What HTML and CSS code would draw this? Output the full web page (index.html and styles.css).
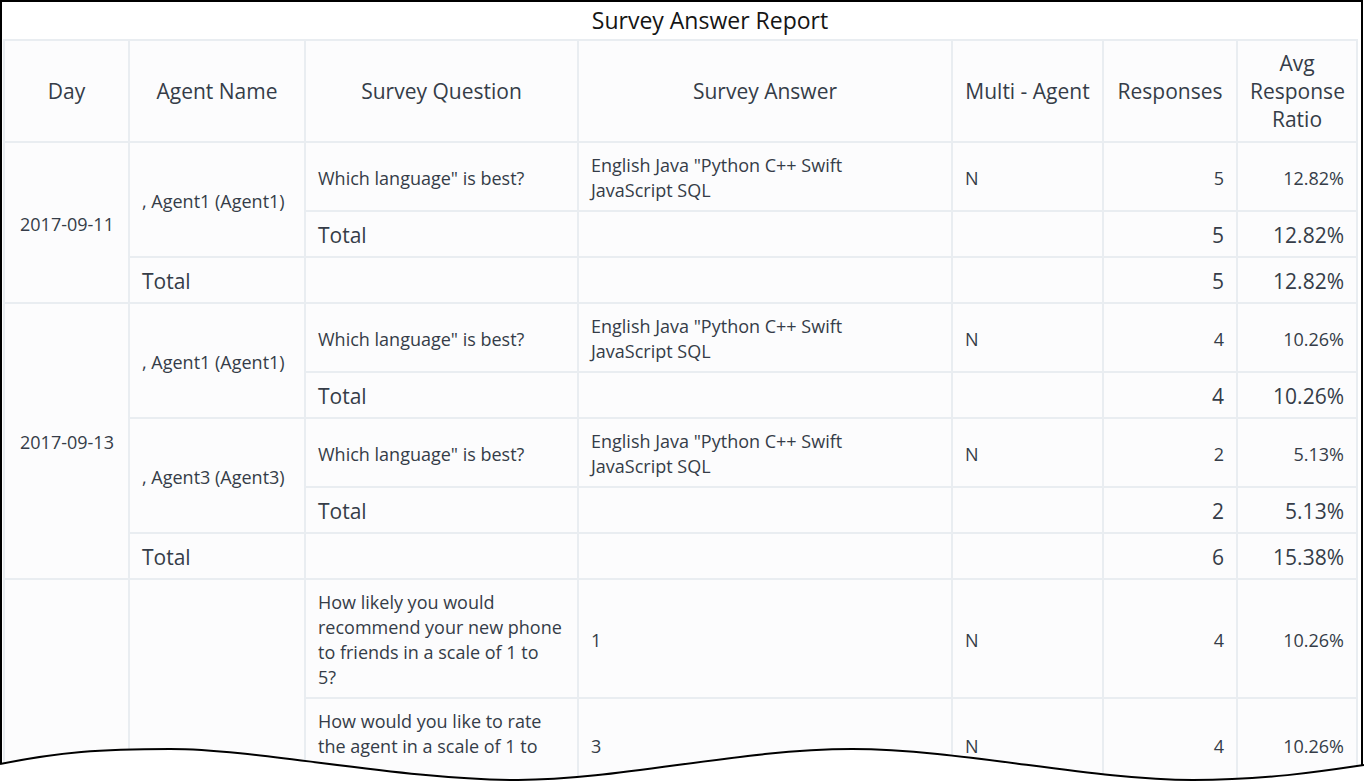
FILE: index.html
```html
<!DOCTYPE html>
<html lang="en">
<head>
  <meta charset="UTF-8">
  <title>Survey Answer Report</title>
  <link rel="stylesheet" href="styles.css">
</head>
<body>

  <div class="report">
    <h1 class="report-title">Survey Answer Report</h1>

    <table class="grid">
      <colgroup>
        <col class="c-day">
        <col class="c-agent">
        <col class="c-question">
        <col class="c-answer">
        <col class="c-multi">
        <col class="c-resp">
        <col class="c-ratio">
      </colgroup>
      <thead>
        <tr>
          <th>Day</th>
          <th>Agent Name</th>
          <th>Survey Question</th>
          <th>Survey Answer</th>
          <th>Multi - Agent</th>
          <th>Responses</th>
          <th>Avg Response Ratio</th>
        </tr>
      </thead>
      <tbody>
        <tr>
          <td rowspan="3" class="day">2017-09-11</td>
          <td rowspan="2">, Agent1 (Agent1)</td>
          <td>Which language" is best?</td>
          <td class="answer">English Java "Python C++ Swift JavaScript SQL</td>
          <td>N</td>
          <td class="num">5</td>
          <td class="num">12.82%</td>
        </tr>
        <tr class="total">
          <td>Total</td>
          <td></td>
          <td></td>
          <td class="num">5</td>
          <td class="num">12.82%</td>
        </tr>
        <tr class="total">
          <td>Total</td>
          <td></td>
          <td></td>
          <td></td>
          <td class="num">5</td>
          <td class="num">12.82%</td>
        </tr>

        <tr>
          <td rowspan="5" class="day">2017-09-13</td>
          <td rowspan="2">, Agent1 (Agent1)</td>
          <td>Which language" is best?</td>
          <td class="answer">English Java "Python C++ Swift JavaScript SQL</td>
          <td>N</td>
          <td class="num">4</td>
          <td class="num">10.26%</td>
        </tr>
        <tr class="total">
          <td>Total</td>
          <td></td>
          <td></td>
          <td class="num">4</td>
          <td class="num">10.26%</td>
        </tr>
        <tr>
          <td rowspan="2">, Agent3 (Agent3)</td>
          <td>Which language" is best?</td>
          <td class="answer">English Java "Python C++ Swift JavaScript SQL</td>
          <td>N</td>
          <td class="num">2</td>
          <td class="num">5.13%</td>
        </tr>
        <tr class="total">
          <td>Total</td>
          <td></td>
          <td></td>
          <td class="num">2</td>
          <td class="num">5.13%</td>
        </tr>
        <tr class="total">
          <td>Total</td>
          <td></td>
          <td></td>
          <td></td>
          <td class="num">6</td>
          <td class="num">15.38%</td>
        </tr>

        <tr>
          <td rowspan="2" class="day"></td>
          <td rowspan="2"></td>
          <td>How likely you would recommend your new phone to friends in a scale of 1 to<br>5?</td>
          <td>1</td>
          <td>N</td>
          <td class="num">4</td>
          <td class="num">10.26%</td>
        </tr>
        <tr>
          <td>How would you like to rate the agent in a scale of 1 to<br>5?</td>
          <td>3</td>
          <td>N</td>
          <td class="num">4</td>
          <td class="num">10.26%</td>
        </tr>
      </tbody>
    </table>
  </div>

  <!-- torn edge of the screenshot -->
  <svg class="torn" width="1364" height="40" viewBox="0 743 1364 40">
    <path d="M0,764 C60,752 100,749 170,749 C260,749 400,780 518,780 C620,780 740,749 852,749 C960,749 1090,780 1193,780 C1270,780 1330,770 1364,765 L1364,783 L0,783 Z" fill="#fff"/>
    <path d="M0,764 C60,752 100,749 170,749 C260,749 400,780 518,780 C620,780 740,749 852,749 C960,749 1090,780 1193,780 C1270,780 1330,770 1364,765" fill="none" stroke="#000" stroke-width="2"/>
  </svg>

</body>
</html>
```

FILE: styles.css
```css
html, body {
  margin: 0;
  height: 100%;
  overflow: hidden;
  background: #fff;
}

body {
  font-family: "Open Sans", "Liberation Sans", sans-serif;
  color: #353c48;
}

.report {
  box-sizing: border-box;
  width: 1363px;
  border: 2px solid #000;
  border-bottom: none;
  padding: 0 4px 0 1px;
  background: #fff;
}

.report-title {
  margin: 0;
  height: 37px;
  line-height: 37px;
  padding-left: 60px;
  text-align: center;
  font-size: 23px;
  font-weight: 400;
  color: #151515;
}

.grid {
  width: 1355px;
  table-layout: fixed;
  border-collapse: collapse;
  border: 2px solid #e9edf1;
  background: #fcfcfd;
}

.c-day { width: 125px; }
.c-agent { width: 176px; }
.c-question { width: 273px; }
.c-answer { width: 374px; }
.c-multi { width: 151px; }
.c-resp { width: 134px; }
.c-ratio { width: 120px; }

.grid th,
.grid td {
  border: 2px solid #e9edf1;
  padding: 10px 12px 7px;
  vertical-align: middle;
  text-align: left;
}

.grid th {
  padding-top: 8px;
  padding-bottom: 8px;
  font-size: 21px;
  line-height: 28px;
  font-weight: 500;
  text-align: center;
  color: #353c48;
}

.grid td {
  font-size: 18px;
  line-height: 25px;
}

.grid td.day {
  padding-left: 15px;
}

.grid td.answer {
  padding-right: 40px;
}

.grid td.num {
  text-align: right;
}

.grid tr.total td {
  font-size: 21px;
  padding-top: 11px;
  padding-bottom: 8px;
}

.torn {
  position: absolute;
  left: 0;
  bottom: 0;
  display: block;
}
```
